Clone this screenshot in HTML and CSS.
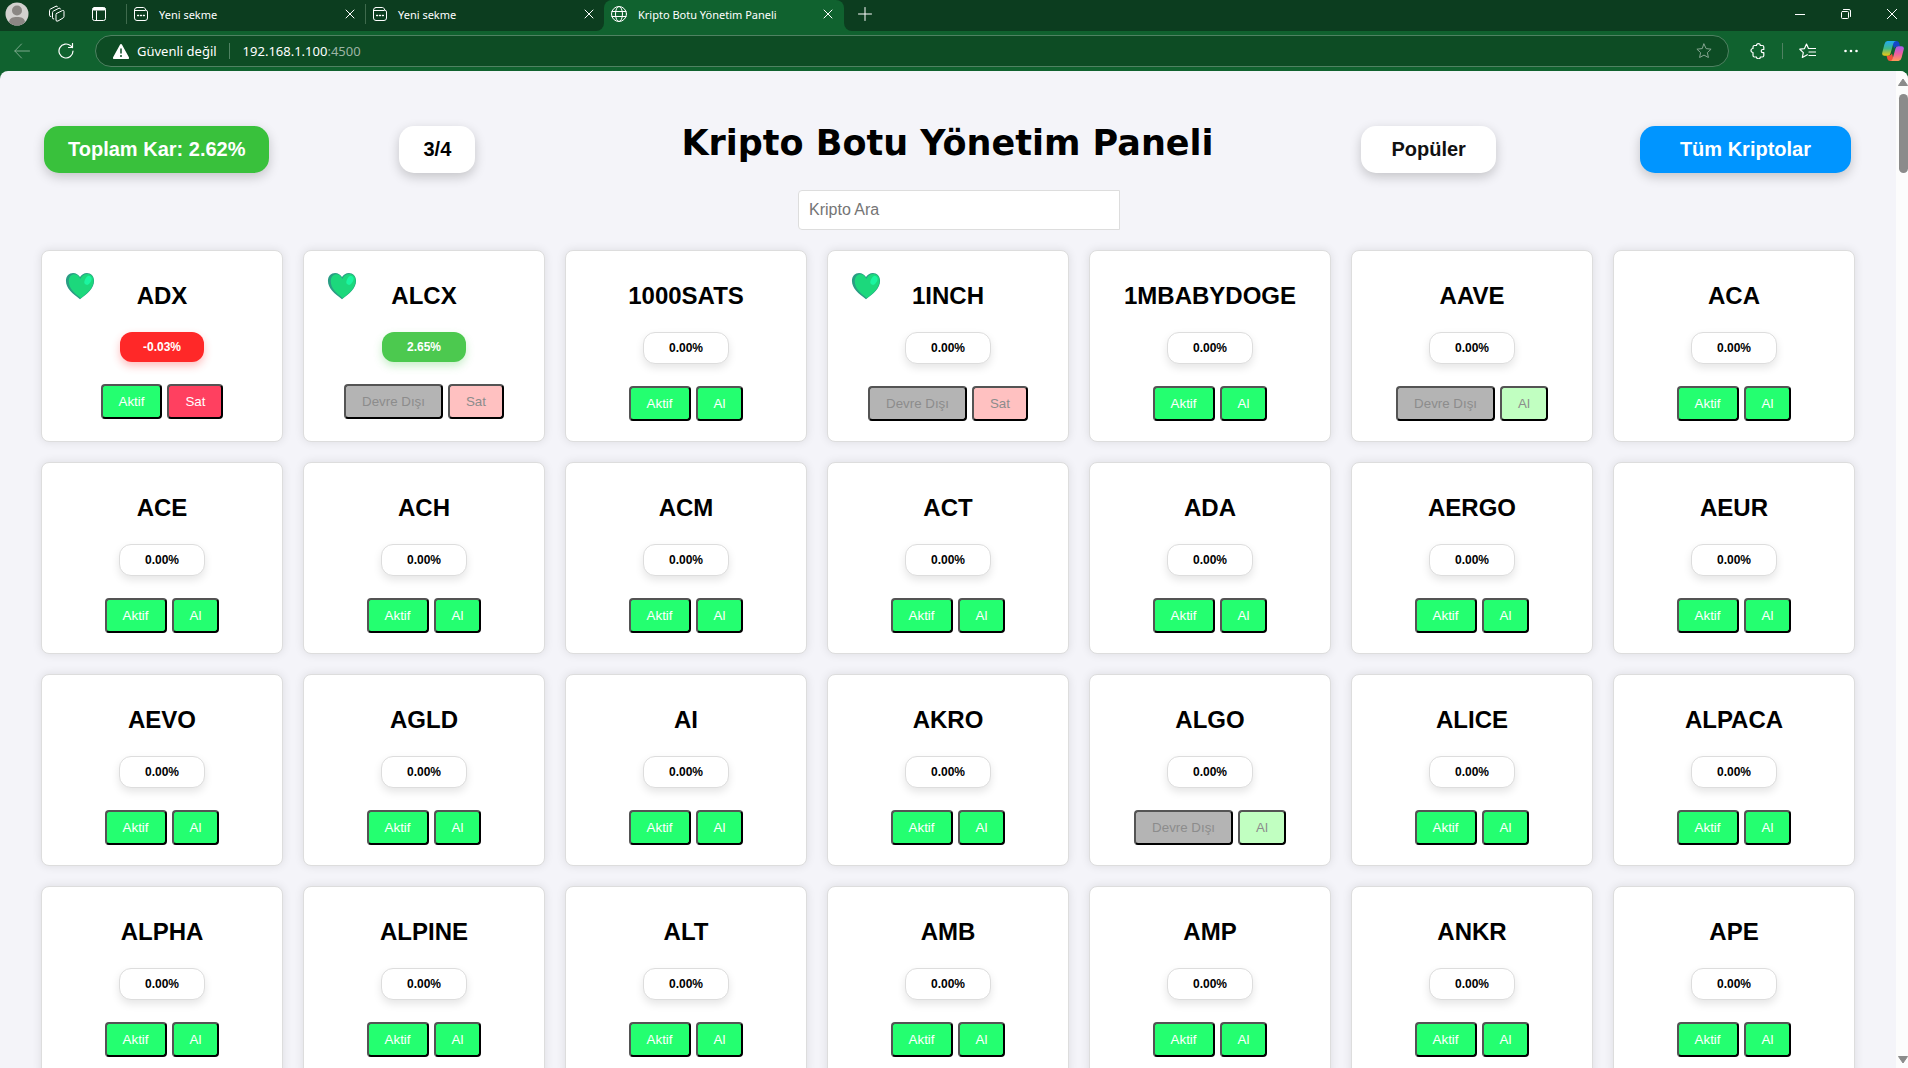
FILE: index.html
```html
<!DOCTYPE html>
<html lang="tr">
<head>
<meta charset="utf-8">
<title>Kripto Botu Yönetim Paneli</title>
<link rel="stylesheet" href="styles.css">
</head>
<body>
<svg class="sprite" aria-hidden="true">
  <symbol id="i-x" viewBox="0 0 10 10"><path d="M1 1l8 8M9 1l-8 8"/></symbol>
  <symbol id="i-page" viewBox="0 0 16 16"><path d="M4 1.500h6.500q1 0 1.500 1l.7 1.500q1.800.3 1.800 2V12q0 2.500-2.500 2.500H4Q1.500 14.500 1.500 12V4Q1.500 1.500 4 1.500zM1.800 4.500h10.500"/><path d="M4.700 9.500h.8M7.600 9.500h.8M10.500 9.500h.8" stroke-width="1.500"/></symbol>
  <symbol id="i-heart" viewBox="0 0 32 32"><path fill="#2a9d84" d="M16 30C8 24.500 1 18.500 1 10.500 1 5 4.500 2 8.600 2c3.200 0 6 1.800 7.400 4.500C17.400 3.800 20.200 2 23.400 2 27.500 2 31 5 31 10.500 31 18.500 24 24.500 16 30z"/><path fill="#1cd87c" d="M17 29C10 24 4 18.500 4 11c0-5 3-7.500 6-7.500 3 0 5 2 6.300 5C18 5 20.500 3.200 24 3.200c3.700 0 6.500 2.800 6.500 7.300C30.500 17.500 24 24 17 29z"/><ellipse cx="24.500" cy="10" rx="3.300" ry="5" fill="#1bf5a0" transform="rotate(28 24.500 10)"/></symbol>
</svg>

<header class="browser">
  <div class="tabstrip">
    <div class="strip strip-left">
      <button class="icon-btn slot-avatar" aria-label="Profil"><svg width="24" height="24" viewBox="0 0 24 24"><circle cx="12" cy="12" r="11.500" fill="#d3d1cf"/><circle cx="12" cy="8.500" r="5" fill="#8b8784"/><path d="M4 20.200C4.500 16 7.500 15 12 15s7.500 1 8 5.200A11.500 11.500 0 0 1 4 20.200z" fill="#8b8784"/></svg></button>
      <button class="icon-btn slot-spaces" aria-label="Çalışma alanları"><svg class="line" width="18" height="18" viewBox="0 0 18 18"><path d="M8.500 8.500l6-3q1.500-.5 1.500 1v5q0 1-1 1.500l-5 3q-2 .8-2-1V9.500q0-.6.5-1z"/><path d="M5.800 14q-1.300.3-1.300-1.200V7.500q0-1 1-1.500L11 3.200q1.200-.5 1.500.8"/><path d="M2.800 11.500q-1.300.3-1.300-1.200V5.500q0-1 1-1.500L8 1.200q1.200-.5 1.500.6"/></svg></button>
      <button class="icon-btn slot-tabs" aria-label="Sekme eylemleri"><svg class="line" width="16" height="16" viewBox="0 0 16 16"><rect x="1.500" y="1.500" width="13" height="13" rx="2"/><path d="M3 3h10" stroke-width="3"/><path d="M5.500 5v9"/></svg></button>
      <div class="tab"><svg class="line" width="16" height="16"><use href="#i-page"/></svg><span>Yeni sekme</span><button class="icon-btn" aria-label="Sekmeyi kapat"><svg class="line" width="10" height="10"><use href="#i-x"/></svg></button></div>
      <div class="tab"><svg class="line" width="16" height="16"><use href="#i-page"/></svg><span>Yeni sekme</span><button class="icon-btn" aria-label="Sekmeyi kapat"><svg class="line" width="10" height="10"><use href="#i-x"/></svg></button></div>
    </div>
    <div class="tab-slot"><div class="tab active"><svg class="line" width="18" height="18" viewBox="0 0 18 18"><circle cx="9" cy="9" r="7.500"/><ellipse cx="9" cy="9" rx="3.500" ry="7.500"/><path d="M2 6.500h14M2 11.500h14"/></svg><span>Kripto Botu Yönetim Paneli</span><button class="icon-btn" aria-label="Sekmeyi kapat"><svg class="line" width="10" height="10"><use href="#i-x"/></svg></button></div></div>
    <div class="strip strip-right">
      <button class="icon-btn" aria-label="Yeni sekme aç"><svg class="line" width="14" height="14" viewBox="0 0 14 14"><path d="M7 .5v13M.5 7h13"/></svg></button>
      <div class="window-controls">
        <button class="icon-btn" aria-label="Küçült"><svg class="line" width="10" height="10" viewBox="0 0 10 10"><path d="M0 5.500h10"/></svg></button>
        <button class="icon-btn" aria-label="Geri yükle"><svg class="line" width="10" height="10" viewBox="0 0 10 10"><rect x=".5" y="2.500" width="7" height="7" rx="1"/><path d="M2.500.5H8A1.500 1.500 0 0 1 9.500 2v5.500"/></svg></button>
        <button class="icon-btn" aria-label="Kapat"><svg class="line" width="10" height="10" viewBox="0 0 10 10"><path d="M0 0l10 10M10 0L0 10"/></svg></button>
      </div>
    </div>
  </div>
  <div class="toolbar">
    <button class="icon-btn nav-btn faded" aria-label="Geri"><svg class="line" width="16" height="16" viewBox="0 0 16 16"><path d="M15.500 8H.8M7.500 1L.8 8l6.700 7"/></svg></button>
    <button class="icon-btn nav-btn" aria-label="Yenile"><svg class="line" width="16" height="16" viewBox="0 0 16 16"><path d="M15 8a7 7 0 1 1-2.200-5.100L14.500 4.500M14.500.5v4h-4" stroke-width="1.200"/></svg></button>
    <div class="address">
      <svg width="16" height="15" viewBox="0 0 16 15"><path d="M8 0a1 1 0 0 1 .9.500l7 12.800A1.100 1.100 0 0 1 15 15H1a1.100 1.100 0 0 1-.9-1.700l7-12.800A1 1 0 0 1 8 0z" fill="#fff"/><path d="M8 4.500v5" stroke="#0d4c24" stroke-width="1.500"/><circle cx="8" cy="12" r="1" fill="#0d4c24"/></svg>
      <span class="warn">Güvenli değil</span>
      <span class="divider"></span>
      <span class="url">192.168.1.100<span class="port">:4500</span></span>
      <button class="icon-btn star" aria-label="Sık kullanılanlara ekle"><svg class="line" width="16" height="16" viewBox="0 0 16 16"><path d="M8 1l2.100 4.600 5 .6-3.700 3.400 1 4.900L8 12.100l-4.400 2.400 1-4.900L.9 6.200l5-.6z"/></svg></button>
    </div>
    <div class="tools">
      <button class="icon-btn" aria-label="Uzantılar"><svg class="line" width="16" height="16" viewBox="0 0 16 16"><path d="M3 5.500V4q0-1.500 1.500-1.500h2a1.900 1.900 0 0 1 3.800 0h2q1.500 0 1.500 1.500v2.500h-1a1.600 1.600 0 0 0 0 3.200h1V12.500q0 1.500-1.500 1.500h-2a1.900 1.900 0 0 1-3.800 0h-2Q3 14 3 12.500V9.500a2 2 0 0 1 0-4z" stroke-width="1.200"/></svg></button>
      <span class="divider"></span>
      <button class="icon-btn" aria-label="Sık kullanılanlar"><svg class="line" width="17" height="16" viewBox="0 0 17 16"><path d="M9.500 5.500L7.500 1 5.500 5.600.8 6.200l3.500 3.400-1 4.900 5-2.800M9.500 5.500h7M10 9h6.500M10 12.500h6.500" stroke-width="1.200"/></svg></button>
      <button class="icon-btn" aria-label="Ayarlar ve diğer"><svg width="14" height="4" viewBox="0 0 14 4" fill="#fff"><circle cx="1.500" cy="2" r="1.300"/><circle cx="7" cy="2" r="1.300"/><circle cx="12.500" cy="2" r="1.300"/></svg></button>
      <button class="icon-btn" aria-label="Copilot"><svg width="22" height="20" viewBox="0 0 22 20">
        <defs>
          <linearGradient id="cp1" x1="0" y1="0" x2="0" y2="1"><stop offset="0" stop-color="#22a8f5"/><stop offset=".5" stop-color="#3fb98a"/><stop offset="1" stop-color="#f2c80f"/></linearGradient>
          <linearGradient id="cp2" x1="0" y1="0" x2="0" y2="1"><stop offset="0" stop-color="#a45bf0"/><stop offset=".5" stop-color="#ee5fa0"/><stop offset="1" stop-color="#ff9a5a"/></linearGradient>
        </defs>
        <path d="M10 0h4.500q2 0 2.700 2L18 5.500h-3q-2 0-3 2z" fill="#1347c8"/>
        <path d="M12 20H8q-2 0-2.600-2L4.500 14.500h2.500q2 0 3-2z" fill="#f0523a"/>
        <path d="M5.500 0H14q-2 0-2.700 2.500L8.500 12.500Q8 14.800 5.500 14.800H2.500Q-.5 14.800.3 11.500L2.500 3Q3.300 0 5.500 0z" fill="url(#cp1)"/>
        <path d="M16.500 20H8q2 0 2.700-2.500l2.800-10Q14 5.200 16.500 5.200h3q3 0 2.200 3.300L19.500 17q-.8 3-3 3z" fill="url(#cp2)"/>
      </svg></button>
    </div>
  </div>
</header>

<div class="viewport">
  <main class="page">
    <div class="topbar">
      <div class="group group-left">
        <div class="chip profit">Toplam Kar: 2.62%</div>
        <div class="chip">3/4</div>
      </div>
      <h1>Kripto Botu Yönetim Paneli</h1>
      <div class="group group-right">
        <button class="chip popular">Popüler</button>
        <button class="chip all">Tüm Kriptolar</button>
      </div>
    </div>
    <form class="search"><input type="search" placeholder="Kripto Ara" aria-label="Kripto Ara"></form>
    <section class="cards" id="cards"></section>
  </main>
  <div class="scrollbar" aria-hidden="true">
    <svg width="10" height="7" viewBox="0 0 10 7"><path d="M5 0l4.500 6.500h-9z" fill="#8b8b8b" stroke="#8b8b8b" stroke-linejoin="round"/></svg>
    <div class="thumb"></div>
    <svg class="down" width="10" height="7" viewBox="0 0 10 7"><path d="M5 7L.5.500h9z" fill="#8b8b8b" stroke="#8b8b8b" stroke-linejoin="round"/></svg>
  </div>
</div>
<script src="cards.js"></script>
</body>
</html>
```
FILE: styles.css
```css
* { box-sizing: border-box; }
body {
  margin: 0;
  height: 100vh;
  display: flex;
  flex-direction: column;
  background: #10622f;
  font-family: "Liberation Sans", Arial, sans-serif;
  color: #000;
}
button { font-family: inherit; cursor: pointer; }
.sprite { position: absolute; width: 0; height: 0; }
.line { fill: none; stroke: #fff; stroke-width: 1; stroke-linecap: round; stroke-linejoin: round; }
.icon-btn {
  display: flex;
  align-items: center;
  justify-content: center;
  padding: 0;
  border: 0;
  background: none;
  flex: none;
}

/* Browser frame */
.browser { font-family: "Noto Sans", "Open Sans", sans-serif; color: #fff; flex: none; }
.tabstrip { display: flex; height: 31px; }
.strip { display: flex; align-items: center; background: #0c3d1f; padding-bottom: 3px; }
.strip-left { border-bottom-right-radius: 8px; }
.strip-right { flex: 1; border-bottom-left-radius: 8px; padding-left: 14px; justify-content: space-between; }
.slot-avatar { width: 34px; }
.slot-spaces { width: 46px; }
.slot-tabs { width: 38px; margin-right: 8px; }
.tab {
  display: flex;
  align-items: center;
  width: 239px;
  height: 20px;
  padding: 0 10px 0 6px;
  gap: 10px;
  border-left: 1px solid #3f6a4d;
  font-size: 11px;
}
.tab span { flex: 1; white-space: nowrap; }
.tab-slot { background: linear-gradient(#0c3d1f 50%, #10622f 50%); }
.tab.active {
  width: 240px;
  height: 31px;
  padding: 0 11px 3px 6px;
  border: 0;
  border-radius: 8px 8px 0 0;
  background: #10622f;
}
.window-controls { display: flex; gap: 36px; padding-right: 11px; }
.toolbar { display: flex; align-items: center; height: 40px; }
.nav-btn { width: 44px; }
.faded { opacity: .45; }
.address {
  flex: 1;
  display: flex;
  align-items: center;
  height: 32px;
  margin-left: 7px;
  padding: 0 16px 0 17px;
  border: 1px solid #4f8262;
  border-radius: 16px;
  background: #0d4c24;
  font-size: 13px;
}
.warn { margin: 0 12px 0 8px; }
.divider { width: 1px; height: 16px; background: #4f8262; }
.url { margin-left: 13px; }
.port { color: #9db5a5; }
.star { margin-left: auto; opacity: .5; }
.tools { display: flex; align-items: center; padding-left: 21px; }
.tools .divider { margin: 0 16px; }
.tools .icon-btn + .icon-btn { margin-left: 28px; }
.tools .icon-btn:last-child { margin: 0 4px 0 24px; }

/* Page */
.viewport {
  flex: 1;
  min-height: 0;
  display: flex;
  overflow: hidden;
  border-radius: 8px 8px 0 0;
  background: #f4f4f9;
}
.page { flex: 1; padding: 47px 41px; overflow-y: auto; scrollbar-width: none; }
.topbar { display: grid; grid-template-columns: 1fr auto 1fr; padding: 0 4px 0 3px; }
.group { display: flex; align-items: flex-start; padding-top: 8px; }
.group-left { gap: 130px; }
.group-right { gap: 144px; justify-content: flex-end; }
.chip {
  padding: 12px 24px;
  border: 0;
  border-radius: 15px;
  background: #fff;
  color: #000;
  font-size: 20px;
  line-height: 23px;
  font-weight: bold;
  white-space: nowrap;
  box-shadow: 0 4px 12px rgba(0, 0, 0, .2);
}
.profit { background: #39c13c; color: #fff; }
.popular { padding: 12px 30px; color: #111; }
.all { padding: 12px 40px; background: #0095ff; color: #fff; }
h1 {
  margin: 0;
  font: bold 35px/50px "Arial Black", "DejaVu Sans", sans-serif;
  text-align: center;
  white-space: nowrap;
}
.search { display: flex; justify-content: center; margin: 22px 0 20px 22px; }
.topbar + .search { margin-top: 22px; }
.topbar { height: 50px; }
.search input {
  width: 322px;
  height: 40px;
  padding: 10px;
  border: 1px solid #ddd;
  border-radius: 4px 0 0 4px;
  background: #fff;
  font: 16px "Liberation Sans", Arial, sans-serif;
  appearance: none;
}
.search input::placeholder { color: #757575; }
.cards { display: grid; grid-template-columns: repeat(7, 1fr); grid-auto-rows: 192px; gap: 20px; }
.card {
  position: relative;
  display: flex;
  flex-direction: column;
  align-items: center;
  padding: 20px;
  border: 1px solid #ddd;
  border-radius: 8px;
  background: #fff;
  box-shadow: 0 0 10px rgba(0, 0, 0, .1);
}
.card h2 { margin: 11px 0 23px; font-size: 24px; line-height: 27px; white-space: nowrap; }
.heart { position: absolute; left: 22px; top: 20px; }
.rate {
  box-sizing: content-box;
  width: 84px;
  padding: 8px 0;
  border: 1px solid #ddd;
  border-radius: 12px;
  background: #fff;
  font-size: 12px;
  line-height: 14px;
  font-weight: bold;
  text-align: center;
  box-shadow: 0 4px 8px rgba(0, 0, 0, .1);
}
.rate.loss { border: 0; background: #ff2828; color: #fff; box-shadow: 0 4px 8px rgba(255, 40, 40, .3); }
.rate.gain { border: 0; background: #4cc94f; color: #fff; box-shadow: 0 4px 8px rgba(76, 201, 79, .3); }
.actions { display: flex; gap: 5px; margin-top: 22px; }
.actions button {
  height: 35px;
  padding: 8px 16px;
  border: 2px outset #000;
  border-radius: 4px;
  background: #24ff70;
  color: #fff;
  white-space: nowrap;
}
.actions .sell { background: #ff4060; }
.actions button:disabled { color: #8c8c8c; background: #b4b4b4; }
.actions .buy:disabled { background: #c1ffc1; }
.actions .sell:disabled { background: #ffc1c1; }

/* Scrollbar */
.scrollbar { width: 12px; display: flex; flex-direction: column; align-items: flex-end; padding: 8px 0 5px 2px; background: #fcfcfc; }
.thumb { width: 9px; height: 79px; margin-top: 8px; border-radius: 5px; background: #8b8b8b; }
.down { margin-top: auto; }
```
FILE: cards.js
```js
const names = ("ADX ALCX 1000SATS 1INCH 1MBABYDOGE AAVE ACA " +
  "ACE ACH ACM ACT ADA AERGO AEUR " +
  "AEVO AGLD AI AKRO ALGO ALICE ALPACA " +
  "ALPHA ALPINE ALT AMB AMP ANKR APE").split(" ");
const rates = { ADX: "-0.03%", ALCX: "2.65%" };
const held = ["ADX", "ALCX", "1INCH"];
const disabled = ["ALCX", "1INCH", "AAVE", "ALGO"];

document.getElementById("cards").innerHTML = names.map(name => {
  const rate = rates[name] || "0.00%";
  const tone = !rates[name] ? "" : rate.startsWith("-") ? " loss" : " gain";
  const own = held.includes(name);
  const off = disabled.includes(name) ? " disabled" : "";
  return `<article class="card">
    ${own ? '<svg class="heart" width="32" height="30" preserveAspectRatio="none"><use href="#i-heart"/></svg>' : ""}
    <h2>${name}</h2>
    <div class="rate${tone}">${rate}</div>
    <div class="actions">
      <button${off}>${off ? "Devre Dışı" : "Aktif"}</button>
      <button class="${own ? "sell" : "buy"}"${off}>${own ? "Sat" : "Al"}</button>
    </div>
  </article>`;
}).join("");
```
